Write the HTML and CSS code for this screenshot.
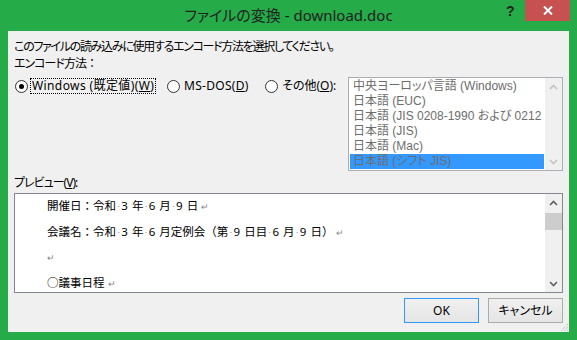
FILE: index.html
```html
<!DOCTYPE html>
<html>
<head>
  <meta charset="utf8" />
  <title>ファイルの変換</title>
  <link rel="stylesheet" href="styles.css">
</head>
<body>
  <div class="window">
    <div class="titlebar">
      <div class="title">ファイルの変換 - download.doc</div>
      <div class="controls">
        <div class="help">?</div>
        <div class="close">
          <svg width="10" height="9" viewBox="0 0 10 9"><path d="M1 0.5 L9 8.5 M9 0.5 L1 8.5" stroke="#fff" stroke-width="2"/></svg>
        </div>
      </div>
    </div>

    <div class="client">
      <div class="intro">このファイルの読み込みに使用するエンコード方法を選択してください。</div>

      <div class="encoding">
        <div class="encoding__left">
          <div class="label">エンコード方法<span class="full">：</span></div>
          <div class="radios">
            <div class="radio radio--windows">
              <span class="radio__circle radio__circle--on"></span>
              <span class="radio__label radio__label--focus">Windows (既定値)(<u>W</u>)</span>
            </div>
            <div class="radio radio--msdos">
              <span class="radio__circle"></span>
              <span class="radio__label">MS-DOS(<u>D</u>)</span>
            </div>
            <div class="radio">
              <span class="radio__circle"></span>
              <span class="radio__label">その他(<u>O</u>):</span>
            </div>
          </div>
        </div>

        <div class="listbox">
          <div class="listbox__items">
            <div class="item">中央ヨーロッパ言語 (Windows)</div>
            <div class="item">日本語 (EUC)</div>
            <div class="item">日本語 (JIS 0208-1990 および 0212</div>
            <div class="item">日本語 (JIS)</div>
            <div class="item">日本語 (Mac)</div>
            <div class="item item--selected">日本語 (シフト JIS)</div>
          </div>
          <div class="scrollbar">
            <div class="scrollbar__btn">
              <svg width="9" height="6" viewBox="0 0 9 6"><path d="M1 5 L4.5 1.5 L8 5" fill="none" stroke="#c4c4c4" stroke-width="1.6"/></svg>
            </div>
            <div class="scrollbar__track"></div>
            <div class="scrollbar__btn">
              <svg width="9" height="6" viewBox="0 0 9 6"><path d="M1 1 L4.5 4.5 L8 1" fill="none" stroke="#c4c4c4" stroke-width="1.6"/></svg>
            </div>
          </div>
        </div>
      </div>

      <div class="label preview-label">プレビュー(<u>V</u>):</div>

      <div class="preview">
        <div class="preview__text">
          <div class="line">開催日：令和<span class="sp">·</span><span class="hw">3</span><span class="hw"></span>年<span class="sp">·</span><span class="hw">6</span><span class="hw"></span>月<span class="sp">·</span><span class="hw">9</span><span class="hw"></span>日<span class="mark">↵</span></div>
          <div class="line">会議名：令和<span class="sp">·</span><span class="hw">3</span><span class="hw"></span>年<span class="sp">·</span><span class="hw">6</span><span class="hw"></span>月定例会（第<span class="sp">·</span><span class="hw">9</span><span class="hw"></span>日目<span class="sp">·</span><span class="hw">6</span><span class="hw"></span>月<span class="sp">·</span><span class="hw">9</span><span class="hw"></span>日）<span class="mark">↵</span></div>
          <div class="line"><span class="mark mark--first">↵</span></div>
          <div class="line">○議事日程<span class="mark">↵</span></div>
        </div>
        <div class="scrollbar">
          <div class="scrollbar__btn">
            <svg width="9" height="6" viewBox="0 0 9 6"><path d="M1 5 L4.5 1.5 L8 5" fill="none" stroke="#606060" stroke-width="1.6"/></svg>
          </div>
          <div class="scrollbar__track">
            <div class="scrollbar__thumb"></div>
          </div>
          <div class="scrollbar__btn">
            <svg width="9" height="6" viewBox="0 0 9 6"><path d="M1 1 L4.5 4.5 L8 1" fill="none" stroke="#606060" stroke-width="1.6"/></svg>
          </div>
        </div>
      </div>

      <div class="buttons">
        <div class="button button--default">OK</div>
        <div class="button">キャンセル</div>
      </div>

      <svg class="grip" width="10" height="10" viewBox="0 0 10 10">
        <path d="M9 2 L2 9 M9 5 L5 9 M9 8 L8 9" stroke="#b0b0b0" stroke-width="1" stroke-dasharray="1 1"/>
      </svg>
    </div>
  </div>
</body>
</html>
```

FILE: styles.css
```css
body{
  margin: 0;
}

.window{
  width: 577px;
  height: 340px;
  box-sizing: border-box;
  padding-bottom: 8px;
  background: #25ab47;
  display: flex;
  flex-direction: column;
  font-family: "Noto Sans", "Noto Sans CJK JP", sans-serif;
}

/* title bar */
.titlebar{
  height: 31px;
  flex: none;
  display: grid;
  grid-template-columns: 1fr auto 1fr;
}
.title{
  grid-column: 2;
  font-size: 15px;
  line-height: 31px;
  color: #222;
  font-feature-settings: "palt";
  white-space: nowrap;
}
.controls{
  grid-column: 3;
  justify-self: end;
  display: flex;
  align-items: flex-start;
  padding-right: 7px;
}
.help{
  width: 8px;
  margin-right: 11px;
  font-family: "Liberation Sans", sans-serif;
  font-weight: bold;
  font-size: 14px;
  line-height: 22px;
  color: #222;
}
.close{
  width: 45px;
  height: 21px;
  background: #c75050;
  display: flex;
  align-items: center;
  justify-content: center;
}

/* client area */
.client{
  flex: 1;
  margin: 0 8px;
  padding: 8px 6px 0;
  background: #f0f0f0;
  position: relative;
  display: flex;
  flex-direction: column;
  font-size: 12px;
  color: #000;
  font-feature-settings: "palt";
}
.intro{
  line-height: 16px;
  letter-spacing: -1.3px;
  white-space: nowrap;
}
.label{
  line-height: 16px;
  letter-spacing: -1px;
}
.full{
  font-feature-settings: normal;
}

.encoding{
  margin-top: 1px;
  display: flex;
  justify-content: space-between;
}
.radios{
  margin-top: 6px;
  height: 16px;
  display: flex;
  align-items: center;
  padding-left: 1px;
}
.radio{
  display: flex;
  align-items: center;
  gap: 2px;
  white-space: nowrap;
}
.radio--windows{
  width: 152px;
  letter-spacing: 0.4px;
}
.radio--msdos{
  width: 98px;
  letter-spacing: 0.3px;
}
.radio__circle{
  width: 13px;
  height: 13px;
  box-sizing: border-box;
  border: 1px solid #333;
  border-radius: 50%;
  background: #fff;
  display: flex;
  align-items: center;
  justify-content: center;
}
.radio__circle--on::after{
  content: "";
  width: 5px;
  height: 5px;
  border-radius: 50%;
  background: #000;
}
.radio__label{
  border: 1px solid transparent;
  padding: 0 1px;
  line-height: 14px;
}
.radio__label--focus{
  border: 1px dotted #000;
}

/* encoding list */
.listbox{
  margin-top: 21px;
  width: 215px;
  height: 94px;
  box-sizing: border-box;
  border: 1px solid #abadb3;
  background: #fff;
  display: flex;
}
.listbox__items{
  flex: 1;
  min-width: 0;
  padding: 1px;
  overflow: hidden;
}
.item{
  height: 15px;
  line-height: 15px;
  padding-left: 3px;
  font-family: "Liberation Sans", "Noto Sans CJK JP", sans-serif;
  color: #6d6d6d;
  white-space: nowrap;
  overflow: hidden;
}
.item--selected{
  background: #3399ff;
}

/* scrollbars */
.scrollbar{
  width: 17px;
  flex: none;
  background: #f0f0f0;
  display: flex;
  flex-direction: column;
}
.scrollbar__btn{
  height: 17px;
  display: flex;
  align-items: center;
  justify-content: center;
}
.scrollbar__track{
  flex: 1;
}
.scrollbar__thumb{
  margin-top: 2px;
  height: 17px;
  background: #cdcdcd;
}

/* preview */
.preview-label{
  margin-top: 4px;
}
.preview{
  margin-top: 2px;
  height: 100px;
  box-sizing: border-box;
  border: 1px solid #828790;
  background: #fff;
  display: flex;
}
.preview__text{
  flex: 1;
  padding-left: 32px;
  font-size: 11.5px;
  line-height: 24.5px;
  font-feature-settings: normal;
  white-space: nowrap;
  overflow: hidden;
}
.hw, .sp{
  display: inline-block;
  width: 5.3px;
  text-align: center;
}
.sp{
  color: #999;
  font-size: 9px;
}
.mark{
  margin-left: 3px;
  color: #888;
  font-size: 9px;
}
.mark--first{
  margin-left: 0;
}

/* buttons */
.buttons{
  margin-top: 5px;
  display: flex;
  justify-content: flex-end;
  gap: 9px;
}
.button{
  width: 75px;
  height: 25px;
  box-sizing: border-box;
  border: 1px solid #acacac;
  background: linear-gradient(#f0f0f0, #e5e5e5);
  text-align: center;
  line-height: 23px;
  color: #000;
}
.button--default{
  border-color: #3399ff;
}

.grip{
  position: absolute;
  right: 0;
  bottom: 0;
}
```
